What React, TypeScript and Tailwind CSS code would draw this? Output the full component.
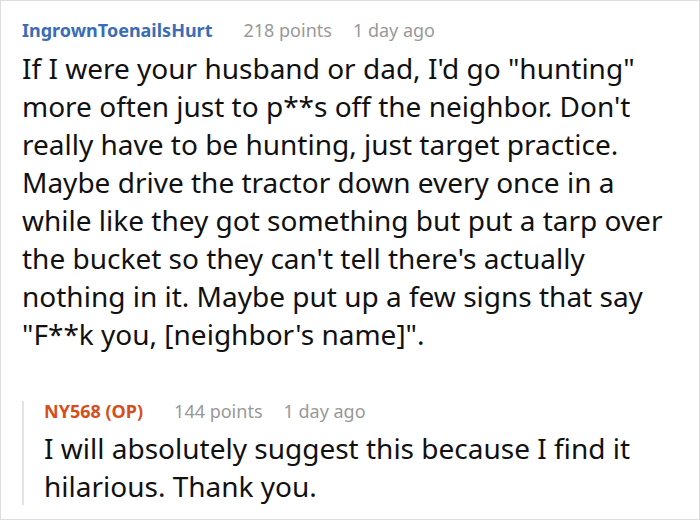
export default function App() {
  return (
    <div className="w-[700px] h-[520px] bg-white border border-[#dddddd] font-['Noto_Sans',sans-serif] text-[#111111] overflow-hidden">
      <div className="pl-[21px] pr-[12px] pt-[15px]">
        <div className="flex items-baseline text-[18px] leading-[28px]">
          <span className="font-bold text-[#3b6cb7]">IngrownToenailsHurt</span>
          <span className="ml-[31px] text-[#999999]">218 points</span>
          <span className="ml-[21px] text-[#999999]">1 day ago</span>
        </div>
        <p className="text-[28px] leading-[38px] mt-[5px]">
          If I were your husband or dad, I'd go "hunting" more often just to p**s off the neighbor. Don't really have to be hunting, just target practice. Maybe drive the tractor down every once in a while like they got something but put a tarp over the bucket so they can't tell there's actually nothing in it. Maybe put up a few signs that say "F**k you, [neighbor's name]".
        </p>
        <div className="mt-[48px] border-l-2 border-[#e3e3e3] pl-[20px]">
          <div className="flex items-baseline text-[18px] leading-[20px]">
            <span className="font-bold text-[#d64e1c]">NY568 (OP)</span>
            <span className="ml-[31px] text-[#999999]">144 points</span>
            <span className="ml-[21px] text-[#999999]">1 day ago</span>
          </div>
          <p className="text-[28px] leading-[38px] mt-[8px]">
            I will absolutely suggest this because I find it hilarious. Thank you.
          </p>
        </div>
      </div>
    </div>
  );
}
